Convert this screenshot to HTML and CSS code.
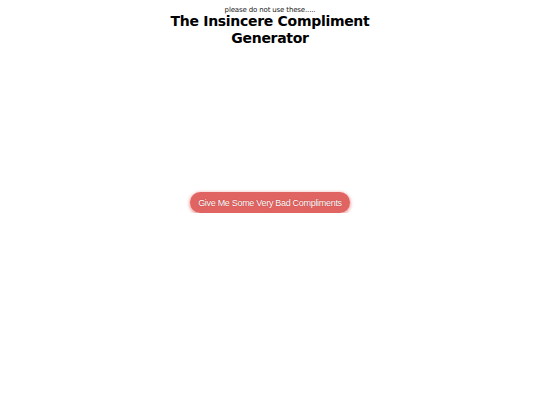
FILE: index.html
```html
<!DOCTYPE html>
<html>
<head>
<meta charset="utf-8">
<link rel="stylesheet" href="styles.css">
</head>
<body>
<header class="head">
  <p class="sub">please do not use these.....</p>
  <h1 class="title">The Insincere Compliment Generator</h1>
</header>
<main class="stage">
  <button class="btn">Give Me Some Very Bad Compliments</button>
</main>
</body>
</html>
```
FILE: styles.css
```css
html, body {
  margin: 0;
  padding: 0;
  background: #ffffff;
}
body {
  font-family: "DejaVu Sans", Verdana, sans-serif;
  color: #000;
}
.head {
  display: flex;
  flex-direction: column;
  align-items: center;
  padding-top: 8px;
}
.sub {
  margin: 0;
  font-size: 7px;
  letter-spacing: -0.15px;
  line-height: 5px;
  color: #222;
}
.title {
  margin: 0;
  width: 220px;
  text-align: center;
  font-size: 14px;
  letter-spacing: -0.3px;
  line-height: 17px;
  font-weight: bold;
}
.stage {
  display: flex;
  justify-content: center;
  padding-top: 145px;
}
.btn {
  font-family: "Liberation Sans", Arial, sans-serif;
  font-size: 9px;
  letter-spacing: -0.3px;
  white-space: nowrap;
  color: #fff;
  text-shadow: 0 0 1px rgba(120,20,20,0.6);
  background: #e06461;
  border: none;
  border-radius: 11px;
  width: 160px;
  height: 21px;
  padding: 0;
  box-shadow: 0 1px 3px 1px rgba(224,100,97,0.5);
}
```
